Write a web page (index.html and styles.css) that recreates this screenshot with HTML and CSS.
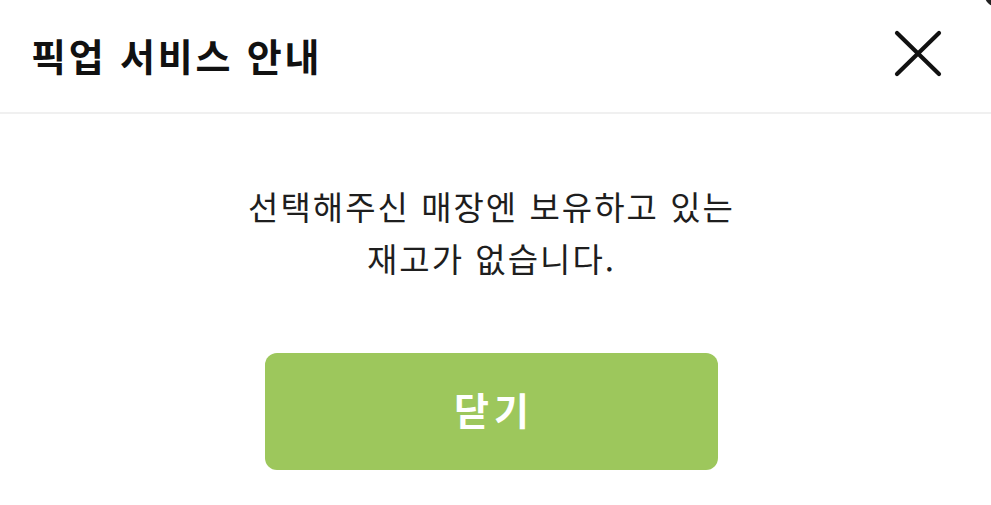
FILE: index.html
```html
<!DOCTYPE html>
<html lang="ko">
<head>
<meta charset="utf-8">
<link rel="stylesheet" href="styles.css">
</head>
<body>
<div class="dialog">
  <div class="corner"></div>
  <header class="head">
    <h1 class="title">픽업 서비스 안내</h1>
    <button class="close" aria-label="닫기">
      <svg width="48" height="48" viewBox="0 0 48 48"><path d="M3 3 L45 44 M45 3 L3 44" stroke="#111" stroke-width="4.2" stroke-linecap="round" fill="none"/></svg>
    </button>
  </header>
  <section class="content">
    <p class="msg">선택해주신 매장엔 보유하고 있는<br>재고가 없습니다.</p>
    <button class="confirm">닫기</button>
  </section>
</div>
</body>
</html>
```

FILE: styles.css
```css
html, body {
  margin: 0;
  padding: 0;
  background: #fff;
}
body {
  font-family: "Noto Sans CJK KR", "Noto Sans", sans-serif;
  color: #1a1a1a;
  width: 991px;
  height: 505px;
  overflow: hidden;
}
.dialog {
  position: relative;
  width: 991px;
  height: 505px;
}
.corner {
  position: absolute;
  top: -14px;
  right: -14px;
  width: 20px;
  height: 20px;
  background: #222;
  border-radius: 50%;
}
.head {
  height: 114px;
  box-sizing: border-box;
  border-bottom: 2px solid #f0f0f0;
  display: flex;
  align-items: center;
  justify-content: space-between;
  padding: 0 49px 0 31px;
}
.title {
  margin: 0;
  font-size: 38px;
  font-weight: 700;
  color: #111;
  letter-spacing: 2.8px;
  position: relative;
  top: -2px;
}
.close {
  border: 0;
  background: none;
  padding: 0;
  width: 48px;
  height: 48px;
  display: flex;
  position: relative;
  top: -2px;
}
.content {
  display: flex;
  flex-direction: column;
  align-items: center;
  padding: 66px 8px 0 0;
}
.msg {
  margin: 0;
  font-size: 33px;
  line-height: 52px;
  letter-spacing: 2px;
  text-align: center;
  color: #1e1e1e;
}
.confirm {
  margin-top: 69px;
  width: 453px;
  height: 117px;
  padding: 0 0 6px 0;
  border: 0;
  border-radius: 12px;
  background: #9dc75c;
  color: #fff;
  font-family: "Noto Sans CJK KR", "Noto Sans", sans-serif;
  font-size: 38px;
  font-weight: 700;
  letter-spacing: 5px;
  text-indent: 5px;
}
```
